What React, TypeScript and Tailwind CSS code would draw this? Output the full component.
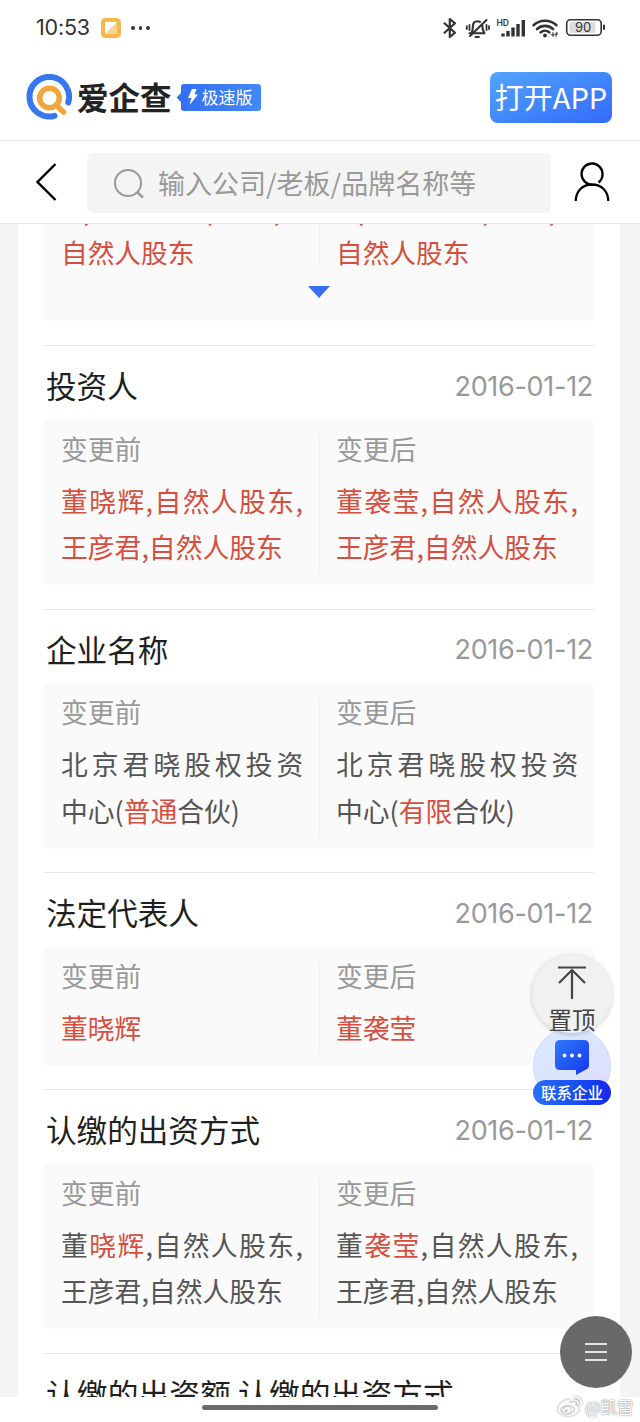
import React from 'react';
import { FaWeibo } from 'react-icons/fa';

interface Part {
  text: string;
  changed?: boolean;
}

interface Line {
  parts: Part[];
  // justified lines get their spacing from here
  tracking?: string;
}

interface ChangeRecord {
  title: string;
  date: string;
  before: Line[];
  after: Line[];
}

const WIDE = 'tracking-[4px]';
const LOOSE = 'tracking-[1.4px]';

const records: ChangeRecord[] = [
  {
    title: '投资人',
    date: '2016-01-12',
    before: [
      { parts: [{ text: '董晓辉,自然人股东,', changed: true }], tracking: LOOSE },
      { parts: [{ text: '王彦君,自然人股东', changed: true }] },
    ],
    after: [
      { parts: [{ text: '董袭莹,自然人股东,', changed: true }], tracking: LOOSE },
      { parts: [{ text: '王彦君,自然人股东', changed: true }] },
    ],
  },
  {
    title: '企业名称',
    date: '2016-01-12',
    before: [
      { parts: [{ text: '北京君晓股权投资' }], tracking: WIDE },
      { parts: [{ text: '中心(' }, { text: '普通', changed: true }, { text: '合伙)' }] },
    ],
    after: [
      { parts: [{ text: '北京君晓股权投资' }], tracking: WIDE },
      { parts: [{ text: '中心(' }, { text: '有限', changed: true }, { text: '合伙)' }] },
    ],
  },
  {
    title: '法定代表人',
    date: '2016-01-12',
    before: [{ parts: [{ text: '董晓辉', changed: true }] }],
    after: [{ parts: [{ text: '董袭莹', changed: true }] }],
  },
  {
    title: '认缴的出资方式',
    date: '2016-01-12',
    before: [
      { parts: [{ text: '董' }, { text: '晓辉', changed: true }, { text: ',自然人股东,' }], tracking: LOOSE },
      { parts: [{ text: '王彦君,自然人股东' }] },
    ],
    after: [
      { parts: [{ text: '董' }, { text: '袭莹', changed: true }, { text: ',自然人股东,' }], tracking: LOOSE },
      { parts: [{ text: '王彦君,自然人股东' }] },
    ],
  },
];

const StatusBar: React.FC = () => (
  <div className="h-14 shrink-0 flex items-center justify-between pl-9 pr-[35px] text-[#333]">
    <div className="flex items-center">
      <span className="w-[55px] font-['Inter'] text-[21.5px] leading-none tracking-[-0.2px] whitespace-nowrap">10:53</span>
      <svg className="ml-[10px]" width="20" height="20" viewBox="0 0 20 20">
        <rect width="20" height="20" rx="4.5" fill="#f7b84b" />
        <rect x="4" y="4" width="12" height="12" rx="1.5" fill="#fbd38a" />
        <path d="M4 4h12L4 16z" fill="#fff" />
      </svg>
      <div className="ml-[10px] flex gap-1">
        <i className="size-[3.5px] rounded-full bg-[#333]" />
        <i className="size-[3.5px] rounded-full bg-[#333]" />
        <i className="size-[3.5px] rounded-full bg-[#333]" />
      </div>
    </div>
    <svg width="164" height="24" viewBox="0 0 164 24" fill="none" stroke="#333" strokeLinecap="round" strokeLinejoin="round">
      {/* bluetooth */}
      <path d="M3.5 7.3 14 16.7 8.8 21V3l5.2 4.3L3.5 16.7" strokeWidth="2.2" />
      {/* muted bell */}
      <path d="M28.5 17.3h15M30.5 16.5c1.2-1.8 1.4-3.4 1.4-6 0-3.3 1.9-5.3 4.6-5.3 1 0 1.8.2 2.5.7M41.3 9.5c0 3.2.5 5 1.8 7M45.5 4 29 20" strokeWidth="2.1" />
      <path d="M34.5 21H38M28.5 9v5M25.8 10.2V13M45.5 9v5M48 10.2V13" strokeWidth="1.8" />
      {/* cellular */}
      <path d="M62 20.5v-3M67 20.5V15M72 20.5v-9M77 20.5V8M82.300 20.500V4" strokeWidth="3.4" strokeLinecap="butt" />
      <text x="55.5" y="9.5" fontSize="8.5" fontWeight="600" fontFamily="Inter" fill="#333" stroke="none">HD</text>
      {/* wifi */}
      <path d="M92.5 9.2c6.5-6 16.5-6 23 0M96 13c4.6-4.2 11.4-4.2 16 0" strokeWidth="2.6" />
      <path d="M99.5 16.5c2.6-2.3 6.4-2.3 9 0" strokeWidth="2.4" />
      <circle cx="104" cy="19.5" r="1.9" fill="#333" stroke="none" />
      <path d="M112 16.5v4M110.3 18.8h3M115 20.5v-3.700h1.200v1.700H115" strokeWidth="1" />
      {/* battery */}
      <rect x="125.7" y="3.7" width="34.5" height="15.6" rx="4" strokeWidth="1.6" />
      <rect x="128.5" y="6" width="26" height="11" rx="1.5" fill="#dedede" stroke="none" />
      <path d="M163 9.500V13" strokeWidth="2" />
      <text x="134" y="16.2" fontSize="13" fontFamily="Inter" fill="#333" stroke="none">90</text>
    </svg>
  </div>
);

const BrandBar: React.FC = () => (
  <div className="h-[85px] shrink-0 flex items-center border-b border-[#ececec] pl-[26px] pr-[28px] pb-[2px]">
    <svg width="46" height="46" viewBox="0 0 46 46" fill="none" strokeLinecap="round">
      <path d="M28.5 41.8A19.8 19.8 0 1 1 42.2 28.5" stroke="#3678f0" strokeWidth="6" />
      <path d="m30 31 7.5 7" stroke="#f2a53c" strokeWidth="5.5" />
      <circle cx="23.5" cy="24" r="9.8" stroke="#f2a53c" strokeWidth="5.5" />
    </svg>
    <span className="ml-[5px] text-[31.5px] leading-none font-bold text-[#222]">爱企查</span>
    <div className="ml-[9px] relative h-[27px] w-[80px] flex items-center rounded-[3px] bg-linear-to-r from-[#356ff0] to-[#4289f8] text-white">
      <i className="absolute -left-[3px] top-[10px] size-[7px] rotate-45 bg-[#356ff0]" />
      <svg className="ml-[6px]" width="12" height="16" viewBox="0 0 12 16">
        <path d="M5 0h4.5L7.500 5.500H11L2.500 16l1.800-7H1z" fill="#fff" />
      </svg>
      <span className="-mt-[2px] ml-[3px] text-[17px] leading-none whitespace-nowrap">极速版</span>
    </div>
    <button className="ml-auto h-[51px] w-[122px] rounded-lg bg-linear-to-br from-[#55a4fb] to-[#3569fb] pb-[2px] text-[29px] leading-none text-white whitespace-nowrap">
      打开APP
    </button>
  </div>
);

const SearchBar: React.FC = () => (
  <div className="h-[83px] shrink-0 flex items-center border-b border-[#e8e8e8] pl-9 pr-[30px]">
    <svg width="21" height="38" viewBox="0 0 21 38" fill="none" stroke="#000" strokeWidth="2.4">
      <path d="M19.5 1 1.5 19l18 18" />
    </svg>
    <div className="mt-px ml-[30px] h-[60px] w-[464px] rounded-md bg-[#f4f4f4] flex items-center pl-[27px] text-[#999]">
      <svg className="mt-[2px]" width="30" height="30" viewBox="0 0 30 30" fill="none" stroke="#999" strokeWidth="2">
        <circle cx="14" cy="14" r="13" />
        <path d="m23 23 6 5.5" strokeWidth="2.5" />
      </svg>
      <span className="ml-[14px] text-[27px] leading-none whitespace-nowrap">输入公司/老板/品牌名称等</span>
    </div>
    <svg className="ml-auto" width="36" height="40" viewBox="0 0 36 40" fill="none" stroke="#000" strokeWidth="2.3">
      <path d="M24.5 20.5C27 18.5 28.5 15.5 28.5 12.5a10.5 10.5 0 1 0-10.500 10C27.500 22.500 34 29 34.300 39M18 22.500C8.500 22.500 2 29 1.700 39" />
    </svg>
  </div>
);

const Column: React.FC<{ label: string; lines: Line[] }> = ({ label, lines }) => (
  <div className="w-[275px] pl-[17px] text-[26.8px] whitespace-nowrap">
    <div className="h-9 mb-[11px] leading-[36px] text-[#999]">{label}</div>
    {lines.map((line, i) => (
      <div key={i} className={`h-[46.5px] leading-[46.5px] ${line.tracking ?? ''}`}>
        {line.parts.map((part, j) => (
          <span key={j} className={part.changed ? 'text-[#d54f40]' : 'text-[#555]'}>{part.text}</span>
        ))}
      </div>
    ))}
  </div>
);

const Record: React.FC<{ record: ChangeRecord }> = ({ record }) => (
  <section className="border-t border-[#e9e9e9] pb-[23.5px]">
    <div className="h-[74px] flex items-center justify-between pt-[5px] pl-[2px] pr-px">
      <h2 className="text-[30.6px] leading-none text-[#1f1f1f]">{record.title}</h2>
      <span className="pt-px font-['Inter'] text-[27px] leading-none tracking-[-0.3px] text-[#999]">{record.date}</span>
    </div>
    <div className="relative flex rounded bg-[#fafafa] pt-[10.5px] pb-[14.5px]">
      <i className="absolute left-[275px] top-4 bottom-3 w-px bg-[#f0f0f0]" />
      <Column label="变更前" lines={record.before} />
      <Column label="变更后" lines={record.after} />
    </div>
  </section>
);

// tail of the record that is scrolled under the search bar
const ScrolledRecord: React.FC = () => (
  <div className="relative h-[97px] mb-[24px] rounded-b bg-[#fafafa]">
    <i className="absolute left-[275px] top-0 h-10 w-px bg-[#f0f0f0]" />
    <div className="flex -translate-y-[34px] text-[26.7px] whitespace-nowrap">
      {['before', 'after'].map(side => (
        <div key={side} className="w-[275px] pl-[17px] text-[#d54f40]">
          <div className="-ml-[6px] h-[41.5px] leading-[40px] tracking-[1.9px]">君,自然人股,东王,</div>
          <div className="leading-[40px]">自然人股东</div>
        </div>
      ))}
    </div>
    <svg className="absolute left-[264px] top-[62px]" width="22" height="12" viewBox="0 0 22 12">
      <path d="M0 0h22L11 12z" fill="#3a70f0" />
    </svg>
  </div>
);

const FloatingActions: React.FC = () => (
  <>
    <div className="absolute left-[533px] top-[1027px] size-[78px] rounded-full border border-[#c9dcfb] bg-linear-to-br from-[#d8ebff] to-[#e0dcfc]" />
    <div className="absolute left-[532px] top-[955px] h-[78px] w-20 rounded-full bg-[#f1f1f1] shadow-[0_1px_5px_rgba(0,0,0,0.2)] flex flex-col items-center">
      <svg className="mt-[11px]" width="30" height="34" viewBox="0 0 30 34" fill="none" stroke="#444" strokeWidth="2.2">
        <path d="M1 1.5h28M15 33V4M2 17 15 4l13 13" />
      </svg>
      <span className="mt-[8px] text-[23.5px] leading-[23px] text-[#444] whitespace-nowrap">置顶</span>
    </div>
    <svg className="absolute left-[555px] top-[1039px]" width="34" height="37" viewBox="0 0 34 37">
      <defs>
        <linearGradient id="bubble" x1="0" y1="0" x2="1" y2="1">
          <stop offset="0" stopColor="#2d7cf8" />
          <stop offset="1" stopColor="#1535f2" />
        </linearGradient>
      </defs>
      <path d="M5 1h24q5 0 5 5v20q0 4-4 5l-9 5v-5H5q-5 0-5-5V6q0-5 5-5z" fill="url(#bubble)" />
      <circle cx="9.5" cy="16.5" r="1.9" fill="#fff" />
      <circle cx="17" cy="16.5" r="1.9" fill="#fff" />
      <circle cx="24.5" cy="16.5" r="1.9" fill="#fff" />
    </svg>
    <div className="absolute left-[533px] top-[1080px] h-[25px] w-[78px] rounded-full bg-linear-to-r from-[#2a6ef5] to-[#1626ee] flex items-center justify-center text-[15.5px] leading-none font-medium text-white whitespace-nowrap">
      联系企业
    </div>
    <button className="absolute left-[560px] top-[1316px] size-[72px] rounded-full bg-[#69696b] flex flex-col items-center justify-center gap-[5.5px]">
      <i className="h-[2.5px] w-[22px] bg-[#e2e2e2]" />
      <i className="h-[2.5px] w-[22px] bg-[#e2e2e2]" />
      <i className="h-[2.5px] w-[22px] bg-[#e2e2e2]" />
    </button>
  </>
);

const App: React.FC = () => {
  return (
    <div className="relative w-[640px] h-[1422px] flex flex-col overflow-hidden bg-white font-['Noto_Sans_CJK_SC',sans-serif]">
      <StatusBar />
      <BrandBar />
      <SearchBar />
      <main className="h-[1173px] shrink-0 overflow-hidden bg-[#f4f4f4] pl-[18px] pr-5">
        <div className="h-full bg-white px-[26px]">
          <ScrolledRecord />
          {records.map(r => (
            <Record key={r.title} record={r} />
          ))}
          <div className="border-t border-[#e9e9e9] h-[75px] flex items-center pt-[5px] pl-[2px]">
            <h2 className="text-[30.7px] leading-none tracking-[0.15px] text-[#1f1f1f] whitespace-nowrap">认缴的出资额 认缴的出资方式</h2>
          </div>
        </div>
      </main>
      <footer className="flex-1">
        <div className="ml-[202px] mt-[8px] h-[5px] w-[236px] rounded-full bg-[#6b6b6b]" />
      </footer>
      <FloatingActions />
      <div className="absolute left-[558px] top-[1395px] flex items-center gap-[3px] text-[16.5px] leading-[24px] text-white whitespace-nowrap [text-shadow:0_0_1px_#888,0_0_2px_#999]">
        <FaWeibo className="size-6 text-[#fafafa] [filter:drop-shadow(0_0_1px_#888)]" />
        @凯雷
      </div>
    </div>
  );
};

export default App;
